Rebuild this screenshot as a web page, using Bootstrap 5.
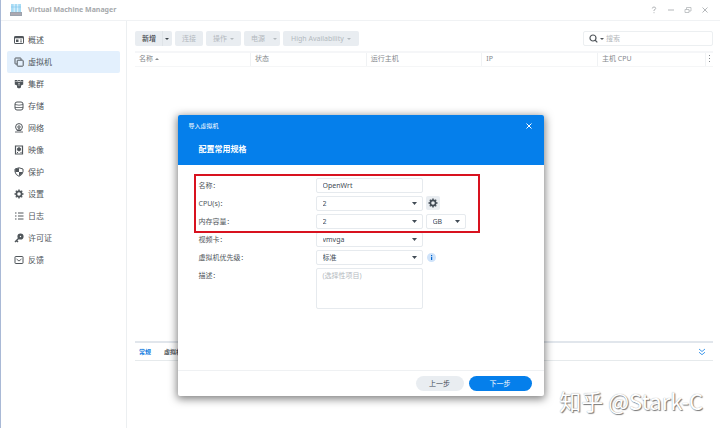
<!DOCTYPE html>
<html lang="zh-CN">
<head>
<meta charset="utf-8">
<meta name="viewport" content="width=device-width, initial-scale=1">
<title>Virtual Machine Manager</title>
<link href="https://cdn.jsdelivr.net/npm/bootstrap@5.3.0/dist/css/bootstrap.min.css" rel="stylesheet">
<style>
body{font:7px/10px "Noto Sans","Noto Sans CJK SC",sans-serif;color:#50565b;background:#fff}
svg{display:block;flex:none}
.app{border-left:1px solid #a9b9d6}
.topbar{height:21px;border-bottom:1px solid #f0f2f4;padding:0 10px 0 9px;gap:6px;color:#a6a9ac}
.topbar .win{gap:7px;color:#b4b7ba}
.plain{border:0;background:none;padding:0;color:inherit;display:block;font:inherit}
.side{width:126px;border-right:1px solid #eceff1;padding:8px 6px}
.side a{height:22px;padding:0 7px;gap:4px;font-size:8px;color:#50565b;text-decoration:none;border-radius:2px}
.side a.active{background:#e3f0fd}
.work{padding:10px 7px 0 8px;min-width:0}
.tools{gap:3px;margin-bottom:5px}
.tool{height:15px;border:0;border-radius:2px;background:#e9edf1;color:#b3b9be;padding:0 7px;gap:3px}
.tool.wide{padding:0 8px}
.tool.on{color:#3d444a;font-weight:500}
.tool.split-l{border-radius:2px 0 0 2px;padding-right:6px}
.tool.split-r{border-radius:0 2px 2px 0;padding:0 3px 0 2px}
.tool.on.split-r{padding:0 3px 0 2px;border-left:1px solid #dfe4e8}
.search{width:130px;height:15px;border:1px solid #eceff1;border-radius:2px;padding:0 5px;gap:2px}
.search input{border:0;outline:0;min-width:0;padding:0;color:inherit}
.search input::placeholder{color:#b5b9bc}
.caret{width:0;height:0;border:2px solid transparent;border-top:2px solid currentColor;border-bottom:0}
.caret.up{border-top:0;border-bottom:2px solid currentColor}
.grid-head{table-layout:fixed;border-top:2px solid #f5f6f8}
.grid-head th{height:14px;padding:0 4px;font-weight:400;color:#85898d;border-bottom:1px solid #f5f6f7;border-right:1px solid #f0f2f4}
.grid-head th:last-child{border-right:0;padding:0 3px}
.detail{height:87px;border-top:2px solid #e1e6ec}
.tabs{height:18px;border-bottom:1px solid #e6eaec;padding:0 7px 0 4px;gap:13px;font-size:6px;font-weight:700}
.tabs .on{color:#1a7fe0}
.overlay{position:absolute;inset:0;padding-top:115px}
.dialog{width:366px;background:#fff;border-radius:2px;box-shadow:0 2px 8px 1px rgba(0,0,0,.5)}
.dialog-top{height:50px;background:#057feb;color:#fff;border-radius:2px 2px 0 0;padding:5px 11px}
.dialog-top h1{font-size:8px;line-height:12px;font-weight:700;margin:11px 0 0 10px}
.cap{font-size:6px;line-height:12px}
.form-area{position:relative;padding:13px 21px 0;min-height:205px}
.line{display:grid;grid-template-columns:114px 107px 1fr;column-gap:3px;min-height:15px;margin-bottom:3px;align-items:start}
.line label{line-height:15px}
.field{height:15px;width:100%;border:1px solid #e6eaee;border-radius:2px;background-color:#fff;color:#414b55;padding:0 6px;line-height:13px;outline:0;display:block}
select.field{appearance:none;background-image:url("data:image/svg+xml,%3Csvg xmlns='http://www.w3.org/2000/svg' width='5' height='3'%3E%3Cpath d='M0 0h5L2.5 3z' fill='%23414b55'/%3E%3C/svg%3E");background-repeat:no-repeat;background-position:right 5px center}
textarea.field{height:41px;resize:none;padding:2px 6px;line-height:9px}
textarea.field::placeholder{color:#b4b9be}
.unit{width:40px}
.gear{width:14px;height:14px;background:#e9edf1;border:0;border-radius:2px;padding:2px;color:#414b55}
.info-dot{width:9px;height:9px;margin:3px 0 0 1px;border-radius:50%;background:#cfe3fa;color:#0668d0}
.frame{position:absolute;left:16px;top:9px;width:286px;height:59px;border:2px solid #d8121f;pointer-events:none}
.dialog-foot{height:26px;border-top:1px solid #eff1f3;padding:0 12px;gap:5px}
.pill{height:15px;border:0;border-radius:8px;width:48px;background:#e9edf1;color:#414b55;padding:0}
.pill.go{width:63px;background:#057feb;color:#fff}
.stamp{position:absolute;right:17px;bottom:14px;font-size:22px;line-height:28px;color:#fff;text-shadow:1px 1px 1px #777,0 0 1px #999;font-family:"Noto Sans CJK SC",sans-serif}
</style>
<script src="https://cdn.jsdelivr.net/npm/bootstrap@5.3.0/dist/js/bootstrap.bundle.min.js"></script>
</head>
<body>
<div class="app position-relative d-flex flex-column vh-100 overflow-hidden">
<header class="topbar d-flex align-items-center">
<svg width="12" height="12" viewBox="0 0 12 12"><path d="M1 0h10v8H1z" fill="#a9dcf5"/><path d="M4.2 0v8M7.7 0v8" stroke="#fff" stroke-width=".7"/><path d="M1 3h10" stroke="#7cc4ec" stroke-width=".6"/><path d="M0 8h12v4H0z" fill="#9ba3ae"/><path d="M1.500 10h9" stroke="#e0b9b9" stroke-width="1" stroke-dasharray="1 1"/></svg>
<strong>Virtual Machine Manager</strong>
<div class="win ms-auto d-flex align-items-center">
<button class="plain" aria-label="帮助"><svg width="10" height="10" viewBox="0 0 10 10" fill="none" stroke="currentColor"><path d="M3.300 3.500Q3.300 2 5 2t1.700 1.400Q6.700 4.400 5 5v1M5 7.200v1"/></svg></button>
<button class="plain" aria-label="最小化"><svg width="10" height="10" viewBox="0 0 10 10" stroke="currentColor"><path d="M2 5h6"/></svg></button>
<button class="plain" aria-label="还原"><svg width="10" height="10" viewBox="0 0 10 10" fill="none" stroke="currentColor" stroke-width=".8"><path d="M2 4.500h4v3H2zM3.500 4.500V2.500h4.500v3.500H6"/></svg></button>
<button class="plain" aria-label="关闭"><svg width="10" height="10" viewBox="0 0 10 10" stroke="currentColor"><path d="M2.500 2.500l5 5M7.500 2.500l-5 5"/></svg></button>
</div>
</header>
<div class="d-flex flex-grow-1">
<nav class="side flex-shrink-0 d-flex flex-column">
<a href="#" class="d-flex align-items-center"><svg width="10" height="10" viewBox="0 0 10 10" fill="none" stroke="currentColor"><rect x=".5" y="1.500" width="9" height="7" rx=".6"/><path d="M.5 2.500h9" stroke-width="1.600"/><path d="M2 4.500h2.500v2.500H2z" fill="currentColor" stroke="none"/><path d="M6 5h2M6 6.800h2" stroke-width=".8"/></svg>概述</a>
<a href="#" class="active d-flex align-items-center"><svg width="10" height="10" viewBox="0 0 10 10" fill="none" stroke="currentColor"><path d="M7 3V1.500Q7 1 6.500 1h-5Q1 1 1 1.500v5Q1 7 1.500 7H3"/><rect x="3.200" y="3.200" width="6" height="6" rx=".6"/></svg>虚拟机</a>
<a href="#" class="d-flex align-items-center"><svg width="10" height="10" viewBox="0 0 10 10" fill="currentColor"><path d="M.8 1h2.700v5.800L.8 5.500zM6.500 1h2.700v4.500L6.500 6.800zM3 3h4v5.500L5 9.500l-2-1z"/><path d="M1.300 2.500h1.700M7 2.500h1.700M4 4.500h2M4 6h2" stroke="#fff" stroke-width=".5"/><path d="M4.100 1h1.800v1.300H4.100z"/></svg>集群</a>
<a href="#" class="d-flex align-items-center"><svg width="10" height="10" viewBox="0 0 10 10" fill="none" stroke="currentColor"><rect x="1" y="1" width="8" height="8" rx="2"/><path d="M1 3.500q4 1.400 8 0M1 6.500h8" stroke-width=".8"/></svg>存储</a>
<a href="#" class="d-flex align-items-center"><svg width="10" height="10" viewBox="0 0 10 10" fill="none" stroke="currentColor"><circle cx="5" cy="4" r="3.400"/><circle cx="5" cy="4" r="1.200"/><path d="M5 5v3M1 9h8M2.800 7.500h4.400" stroke-width=".9"/></svg>网络</a>
<a href="#" class="d-flex align-items-center"><svg width="10" height="10" viewBox="0 0 10 10" fill="none" stroke="currentColor"><path d="M1.500 1h7v8h-7z" stroke-width="1.200"/><circle cx="5" cy="4.300" r="1.600" fill="currentColor"/><path d="M3 7.500h1M6.500 7.500h1"/></svg>映像</a>
<a href="#" class="d-flex align-items-center"><svg width="10" height="10" viewBox="0 0 10 10" fill="none" stroke="currentColor"><path d="M5 .8L9 2v2.800Q8.600 7.800 5 9.300 1.400 7.800 1 4.800V2z"/><path d="M5 1v4H1.200V2.200zM5 5h3.800Q8.300 7.500 5 9z" fill="currentColor" stroke="none"/></svg>保护</a>
<a href="#" class="d-flex align-items-center"><svg width="10" height="10" viewBox="0 0 10 10" fill="none" stroke="currentColor"><circle cx="5" cy="5" r="2.600" stroke-width="1.600"/><path d="M5 .5v1.500M5 8v1.500M.5 5H2M8 5h1.500M1.800 1.800l1 1M7.200 7.200l1 1M8.200 1.800l-1 1M2.800 7.200l-1 1" stroke-width="1.400"/></svg>设置</a>
<a href="#" class="d-flex align-items-center"><svg width="10" height="10" viewBox="0 0 10 10" stroke="currentColor"><path d="M1 2h1.500M4 2h5.500M1 5h1.500M4 5h5.500M1 8h1.500M4 8h5.500"/></svg>日志</a>
<a href="#" class="d-flex align-items-center"><svg width="10" height="10" viewBox="0 0 10 10" fill="none" stroke="currentColor"><circle cx="6.500" cy="3.500" r="1.900" stroke-width="2.400"/><path d="M5 5L1 9M2.500 7.500L4 9" stroke-width="1.500"/></svg>许可证</a>
<a href="#" class="d-flex align-items-center"><svg width="10" height="10" viewBox="0 0 10 10" fill="none" stroke="currentColor"><rect x="1" y="1.500" width="8" height="7" rx=".6"/><path d="M2.500 4L5 6l2.500-2" stroke-width=".9"/></svg>反馈</a>
</nav>
<main class="work flex-grow-1 d-flex flex-column">
<div class="tools d-flex align-items-center">
<div class="d-flex"><button class="tool on split-l">新增</button><button class="tool on split-r" aria-label="更多新增选项"><span class="caret d-block"></span></button></div>
<button class="tool" disabled>连接</button>
<button class="tool d-flex align-items-center" disabled>操作<span class="caret"></span></button>
<div class="d-flex"><button class="tool split-l" disabled>电源</button><button class="tool split-r" disabled aria-label="更多电源选项"><span class="caret d-block"></span></button></div>
<button class="tool wide d-flex align-items-center" disabled>High Availability<span class="caret"></span></button>
<div class="search ms-auto d-flex align-items-center"><svg width="9" height="9" viewBox="0 0 9 9" fill="none" stroke="currentColor" stroke-width="1.200"><circle cx="4" cy="4" r="3"/><path d="M6 6l2.300 2.300"/></svg><span class="caret"></span><input class="flex-grow-1" type="search" aria-label="搜索" placeholder="搜索"></div>
</div>
<table class="grid-head w-100">
<colgroup><col style="width:20%"><col style="width:20%"><col style="width:20%"><col style="width:20%"><col><col style="width:8px"></colgroup>
<thead><tr><th>名称 <span class="caret up d-inline-block align-middle"></span></th><th>状态</th><th>运行主机</th><th>IP</th><th>主机 CPU</th><th><svg width="2" height="8" viewBox="0 0 2 8" fill="currentColor"><path d="M0 0h1v1H0zM0 3h1v1H0zM0 6h1v1H0z"/></svg></th></tr></thead>
</table>
<section class="detail mt-auto">
<div class="tabs d-flex align-items-center"><a href="#" class="on text-decoration-none">常规</a><a href="#" class="text-reset text-decoration-none">虚拟机</a>
<button class="plain ms-auto" aria-label="收起"><svg width="8" height="8" viewBox="0 0 8 8" fill="none" stroke="#2f8fe8" stroke-width=".9"><path d="M1 1l3 2.500L7 1M1 4.200l3 2.500 3-2.500"/></svg></button></div>
</section>
</main>
</div>
<div class="stamp">知乎 @Stark-C</div>
<div class="overlay d-flex justify-content-center align-items-start">
<form class="dialog" role="dialog" aria-label="导入虚拟机">
<div class="dialog-top">
<div class="cap d-flex align-items-center">导入虚拟机<button type="button" class="plain ms-auto" aria-label="关闭"><svg width="8" height="8" viewBox="0 0 8 8" stroke="#fff"><path d="M1.500 1.500l5 5M6.500 1.500l-5 5"/></svg></button></div>
<h1>配置常用规格</h1>
</div>
<div class="form-area">
<div class="line"><label for="nm">名称：</label><input class="field" id="nm" value="OpenWrt"></div>
<div class="line"><label for="cpu">CPU(s)：</label><select class="field" id="cpu"><option>2</option></select><button type="button" class="gear" aria-label="CPU 设置"><svg width="10" height="10" viewBox="0 0 10 10" fill="none" stroke="currentColor"><circle cx="5" cy="5" r="2.600" stroke-width="1.600"/><path d="M5 .5v1.500M5 8v1.500M.5 5H2M8 5h1.500M1.800 1.800l1 1M7.200 7.200l1 1M8.200 1.800l-1 1M2.800 7.200l-1 1" stroke-width="1.400"/></svg></button></div>
<div class="line"><label for="mem">内存容量：</label><select class="field" id="mem"><option>2</option></select><select class="field unit" aria-label="容量单位"><option>GB</option></select></div>
<div class="line"><label for="vid">视频卡：</label><select class="field" id="vid"><option>vmvga</option></select></div>
<div class="line"><label for="pri">虚拟机优先级：</label><select class="field" id="pri"><option>标准</option></select><span class="info-dot"><svg width="9" height="9" viewBox="0 0 9 9" fill="currentColor"><path d="M4 2h1.200v1.200H4zM4 4h1.200v3H4z"/></svg></span></div>
<div class="line"><label for="desc">描述：</label><textarea class="field" id="desc" placeholder="(选择性项目)"></textarea></div>
<div class="frame"></div>
</div>
<div class="dialog-foot d-flex align-items-center justify-content-end"><button type="button" class="pill">上一步</button><button type="button" class="pill go">下一步</button></div>
</form>
</div>
</div>
</body>
</html>
